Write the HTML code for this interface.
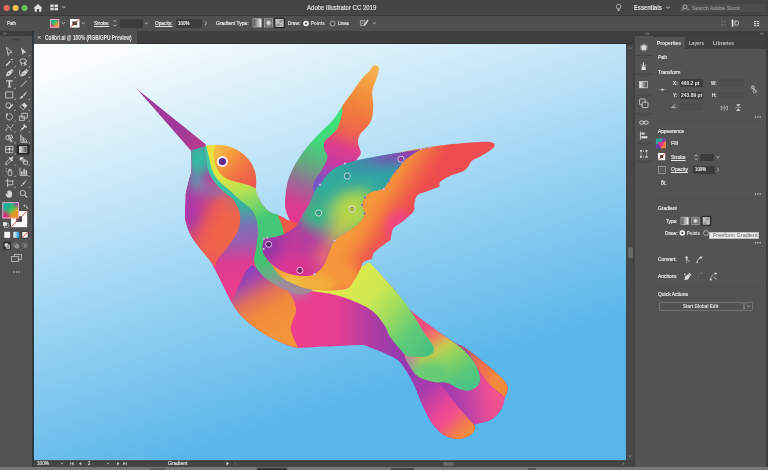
<!DOCTYPE html><html><head><meta charset="utf-8"><title>Adobe Illustrator CC 2019</title><style>
*{box-sizing:border-box;margin:0;padding:0}
html,body{width:768px;height:470px;overflow:hidden;background:#535353}
body{position:relative;font-family:"Liberation Sans",sans-serif;font-size:6.2px;color:#e6e6e6;line-height:1;-webkit-text-stroke:.22px currentColor}
.a{position:absolute}
.t{position:absolute;white-space:nowrap;line-height:1;transform-origin:0 50%}
.b{font-weight:bold;-webkit-text-stroke:0}
.u{text-decoration:underline;text-decoration-thickness:.5px;text-underline-offset:.8px}
#title{left:0;top:0;width:768px;height:15px;background:#454545}
#ctrl{left:0;top:15px;width:768px;height:16px;background:#4f4f4f;border-top:.8px solid #393939}
#tabs{left:33px;top:31px;width:602px;height:13.3px;background:#3e3e3e;border-bottom:.8px solid #303030}
#tab{left:33.6px;top:31.4px;width:103.4px;height:12.9px;background:#505050}
#tools{left:0;top:31px;width:32px;height:436px;background:#525252}
#toolsh{left:0;top:31px;width:32px;height:5px;background:#3e3e3e}
#tooledge{left:32px;top:31px;width:1.5px;height:436px;background:#333a3e}
#canvas{left:33.5px;top:44.3px;width:592.5px;height:416.2px;background:linear-gradient(162.3deg,#fafdfe 5.4%,#aadbf5 41%,#59b6ea 76.5%)}
#vscroll{left:626px;top:44px;width:7px;height:423px;background:#494949;border-left:1.2px solid #3c444c}
#vthumb{left:628px;top:247px;width:5px;height:11px;background:#6b6b6b;border-radius:2.5px}
#hscroll{left:33.5px;top:460.5px;width:600.5px;height:6.8px;background:#454545;border-top:.6px solid #383838}
#hthumb{left:443px;top:461.7px;width:11px;height:4.3px;background:#666;border-radius:2.1px}
#gap{left:633px;top:31px;width:1.6px;height:436px;background:#414141}
#strip{left:634.6px;top:31px;width:18px;height:436px;background:#535353}
#striph{left:634.6px;top:31px;width:18px;height:5px;background:#3e3e3e}
#pedge{left:652.5px;top:31px;width:.9px;height:436px;background:#434343}
#panel{left:653.3px;top:31px;width:112.5px;height:436px;background:#535353}
#panelh{left:653.3px;top:31px;width:114.7px;height:5.5px;background:#3e3e3e}
#ptabs{left:653.3px;top:36.5px;width:112.5px;height:12.3px;background:#404040}
#ptab{left:653.3px;top:36.5px;width:32px;height:12.3px;background:#535353}
#redge{left:765.8px;top:31px;width:2.2px;height:436px;background:#3c3c3c}
#bottom{left:0;top:467.3px;width:768px;height:2.7px;background:#777774}
.in{position:absolute;background:#3c3c3c;border-radius:.8px}
.ind{position:absolute;background:#4e4e4e;border-radius:.8px}
svg{position:absolute;left:0;top:0}
</style></head><body><div class="a" id="title"></div><div class="a" id="ctrl"></div><div class="a" id="tabs"></div><div class="a" id="tab"></div><div class="a" id="tools"></div><div class="a" id="toolsh"></div><div class="a" id="tooledge"></div><div class="a" id="canvas"></div><div class="a" id="vscroll"></div><div class="a" id="vthumb"></div><div class="a" id="hscroll"></div><div class="a" id="hthumb"></div><div class="a" id="gap"></div><div class="a" id="strip"></div><div class="a" id="striph"></div><div class="a" id="pedge"></div><div class="a" id="panel"></div><div class="a" id="panelh"></div><div class="a" id="ptabs"></div><div class="a" id="ptab"></div><div class="a" id="redge"></div><div class="a" id="bottom"></div><svg width="768" height="470" viewBox="0 0 768 470"><defs><clipPath id="cv"><rect x="33.5" y="44.3" width="592.5" height="416.2"/></clipPath></defs><g clip-path="url(#cv)"><defs><filter id="bl" x="-50%" y="-50%" width="200%" height="200%"><feGaussianBlur stdDeviation="5"/></filter><filter id="bl2" x="-50%" y="-50%" width="200%" height="200%"><feGaussianBlur stdDeviation="6.5"/></filter><linearGradient id="gW1a" gradientUnits="userSpaceOnUse" x1="338" y1="108" x2="292" y2="222"><stop offset="0" stop-color="#3fe57c"/><stop offset="0.3" stop-color="#40d87a"/><stop offset="0.5" stop-color="#62ad80"/><stop offset="0.68" stop-color="#9a6a96"/><stop offset="0.85" stop-color="#d83c92"/><stop offset="1" stop-color="#ea3690"/></linearGradient><linearGradient id="gW1b" gradientUnits="userSpaceOnUse" x1="372" y1="66" x2="330" y2="190"><stop offset="0" stop-color="#f7b54c"/><stop offset="0.22" stop-color="#f3913c"/><stop offset="0.42" stop-color="#f0743f"/><stop offset="0.54" stop-color="#ee6250"/><stop offset="0.66" stop-color="#de3e8e"/><stop offset="0.8" stop-color="#c83aa0"/><stop offset="0.92" stop-color="#8c50c0"/><stop offset="1" stop-color="#7058c8"/></linearGradient><linearGradient id="gH1" gradientUnits="userSpaceOnUse" x1="140" y1="92" x2="200" y2="148"><stop offset="0" stop-color="#9a3a9e"/><stop offset="0.7" stop-color="#a23a98"/><stop offset="1" stop-color="#b83a8c"/></linearGradient><linearGradient id="gBase" gradientUnits="userSpaceOnUse" x1="290" y1="330" x2="395" y2="330"><stop offset="0" stop-color="#ee3f8c"/><stop offset="0.45" stop-color="#e53e92"/><stop offset="0.8" stop-color="#ab3ca4"/><stop offset="1" stop-color="#9a3cac"/></linearGradient><clipPath id="c_base"><path d="M205.0 146.0C205.8 146.1 208.2 146.3 210.0 146.4C211.8 146.5 213.2 146.2 216.0 146.4C218.8 146.6 223.3 146.7 227.0 147.6C230.7 148.5 234.5 149.8 238.0 152.0C241.5 154.2 245.4 157.4 248.0 160.5C250.6 163.6 252.6 167.2 253.8 170.5C255.1 173.8 255.2 177.1 255.5 180.0C255.8 182.9 254.9 185.2 255.3 188.0C255.7 190.8 256.5 193.8 258.0 197.0C259.5 200.2 262.2 204.4 264.4 207.0C266.6 209.6 268.6 211.1 271.0 212.5C273.4 213.9 276.0 214.0 279.0 215.6C282.0 217.2 283.0 216.3 289.0 222.0C295.0 227.7 305.7 240.0 315.0 250.0C324.3 260.0 337.5 278.0 345.0 282.0C352.5 286.0 356.0 277.1 360.0 274.0C364.0 270.9 367.3 265.0 368.8 263.2C372.8 267.3 385.7 279.7 392.6 287.6C399.5 295.5 403.8 303.8 410.4 310.4C417.0 317.0 424.6 321.7 432.5 327.4C440.4 333.1 452.8 341.3 458.0 344.6C463.2 347.9 459.3 343.8 464.0 347.0C468.7 350.2 479.8 358.9 486.0 364.0C492.2 369.1 497.8 373.9 501.4 377.6C505.0 381.3 506.5 383.4 507.4 386.0C508.3 388.6 507.2 391.2 506.8 393.0C506.4 394.8 505.1 396.3 504.8 397.0C504.6 397.9 504.5 400.0 503.8 402.3C503.1 404.6 502.4 408.0 500.4 410.8C498.4 413.6 495.0 417.3 491.9 419.3C488.8 421.3 484.7 421.9 481.7 422.7C478.7 423.5 475.3 424.1 474.0 424.4C474.1 425.3 475.6 427.8 474.9 429.6C474.2 431.5 472.4 433.9 469.8 435.5C467.2 437.1 462.7 438.5 459.6 438.9C456.5 439.3 454.1 439.0 451.0 438.0C447.9 437.0 444.2 435.8 440.8 433.0C437.4 430.2 433.7 425.8 430.6 421.0C427.5 416.2 424.8 410.2 422.0 404.0C419.2 397.8 416.4 389.4 413.6 383.6C410.8 377.8 407.6 372.9 405.0 369.0C402.4 365.1 401.3 362.6 398.0 360.0C394.7 357.4 389.7 355.6 385.0 353.5C380.3 351.4 374.2 348.9 370.0 347.5C365.8 346.1 367.5 345.1 360.0 345.0C352.5 344.9 335.3 346.2 325.0 346.6C314.7 347.1 304.9 348.2 298.0 347.7C291.1 347.2 289.4 345.9 283.5 343.5C277.6 341.1 269.6 337.5 262.6 333.0C255.7 328.5 247.0 321.6 241.8 316.4C236.6 311.2 234.8 307.7 231.3 301.8C227.8 295.9 224.2 287.4 220.9 280.9C217.7 274.4 215.1 267.8 211.8 262.6C208.5 257.5 204.8 254.5 201.3 250.0C197.8 245.5 193.5 240.3 190.9 235.5C188.3 230.7 186.7 224.6 185.7 220.9C184.7 217.2 185.0 217.0 185.0 213.5C185.0 210.0 185.5 203.5 185.7 200.0C185.9 196.5 185.4 195.9 186.0 192.6C186.6 189.3 188.1 183.5 189.0 180.0C189.9 176.5 190.9 175.0 191.3 171.7C191.7 168.4 191.6 163.6 191.5 160.0C191.4 156.4 191.1 152.0 191.0 150.4C193.3 149.7 202.7 146.7 205.0 146.0Z"/></clipPath><linearGradient id="gT3" gradientUnits="userSpaceOnUse" x1="458" y1="346" x2="506" y2="392"><stop offset="0" stop-color="#9a5a7c"/><stop offset="0.2" stop-color="#c8606a"/><stop offset="0.45" stop-color="#f0704c"/><stop offset="0.7" stop-color="#f28a3a"/><stop offset="1" stop-color="#f28a3a"/></linearGradient><clipPath id="c_T3"><path d="M450.0 340.0C451.3 340.8 455.7 343.4 458.0 344.6C460.3 345.8 459.3 343.8 464.0 347.0C468.7 350.2 479.8 358.9 486.0 364.0C492.2 369.1 497.8 373.9 501.4 377.6C505.0 381.3 506.5 383.4 507.4 386.0C508.3 388.6 507.2 391.2 506.8 393.0C506.4 394.8 505.1 396.3 504.8 397.0C502.2 394.9 493.8 388.8 489.5 384.4C485.2 380.0 482.9 376.2 479.3 370.8C475.7 365.4 469.9 355.1 468.0 352.0C465.0 350.0 453.0 342.0 450.0 340.0Z"/></clipPath><linearGradient id="gF1" gradientUnits="userSpaceOnUse" x1="412" y1="372" x2="470" y2="432"><stop offset="0" stop-color="#953ab2"/><stop offset="0.3" stop-color="#b03caa"/><stop offset="0.55" stop-color="#e6449a"/><stop offset="0.72" stop-color="#f2528a"/><stop offset="0.88" stop-color="#f27a50"/><stop offset="1" stop-color="#f28c38"/></linearGradient><linearGradient id="gF2" gradientUnits="userSpaceOnUse" x1="440" y1="400" x2="503" y2="392"><stop offset="0" stop-color="#9c3cb0"/><stop offset="0.4" stop-color="#b840a8"/><stop offset="0.75" stop-color="#ea4e94"/><stop offset="1" stop-color="#f5558c"/></linearGradient><linearGradient id="gT2" gradientUnits="userSpaceOnUse" x1="414" y1="314" x2="466" y2="392"><stop offset="0" stop-color="#f2487f"/><stop offset="0.2" stop-color="#f0527c"/><stop offset="0.33" stop-color="#ee8260"/><stop offset="0.45" stop-color="#c8c850"/><stop offset="0.58" stop-color="#98d45c"/><stop offset="0.8" stop-color="#5cc878"/><stop offset="1" stop-color="#48c488"/></linearGradient><clipPath id="c_T2"><path d="M410.4 310.4C414.1 313.2 425.0 321.9 432.5 327.4C440.0 332.9 449.4 338.9 455.5 343.6C461.6 348.3 465.3 351.3 469.0 355.5C472.7 359.7 475.8 365.0 477.6 369.0C479.4 373.0 480.0 376.5 480.0 379.3C480.0 382.1 479.4 384.1 477.6 386.0C475.8 387.9 472.1 389.9 469.0 390.4C465.9 390.8 462.7 390.0 459.0 388.7C455.3 387.4 451.2 383.8 447.0 382.7C442.8 381.6 438.7 383.0 434.0 382.0C429.3 381.0 422.5 379.1 418.7 376.8C414.9 374.5 413.4 371.8 411.0 368.0C408.6 364.2 405.8 359.5 404.0 354.0C402.2 348.5 400.2 341.0 400.0 335.0C399.8 329.0 401.3 322.1 403.0 318.0C404.7 313.9 409.2 311.7 410.4 310.4Z"/></clipPath><linearGradient id="gT1" gradientUnits="userSpaceOnUse" x1="345" y1="275" x2="430" y2="352"><stop offset="0" stop-color="#e2ea4c"/><stop offset="0.3" stop-color="#cde850"/><stop offset="0.52" stop-color="#a0dc5e"/><stop offset="0.75" stop-color="#62cc76"/><stop offset="1" stop-color="#48c080"/></linearGradient><clipPath id="c_T1"><path d="M300.0 287.0C305.0 285.8 321.3 282.5 330.0 280.0C338.7 277.5 345.4 275.0 352.0 272.0C358.6 269.0 366.4 263.8 369.3 262.2C373.2 266.4 385.8 279.6 392.6 287.6C399.5 295.6 405.2 302.9 410.4 310.4C415.6 317.9 420.5 327.1 424.0 332.5C427.5 337.9 429.8 340.2 431.5 343.0C433.2 345.8 434.1 347.6 434.0 349.5C433.9 351.4 432.7 353.2 431.0 354.5C429.3 355.8 426.8 356.7 424.0 357.0C421.2 357.3 417.1 356.9 414.0 356.5C410.9 356.1 409.4 357.8 405.5 354.7C401.6 351.6 394.4 342.9 390.9 338.0C387.4 333.1 387.5 329.6 384.3 325.0C381.1 320.4 377.4 314.7 371.8 310.5C366.2 306.3 357.9 302.8 350.9 300.0C343.9 297.2 336.5 295.3 330.0 293.8C323.5 292.3 317.0 292.1 312.0 291.0C307.0 289.9 302.0 287.7 300.0 287.0Z"/></clipPath><linearGradient id="gB4" gradientUnits="userSpaceOnUse" x1="248" y1="268" x2="285" y2="335"><stop offset="0" stop-color="#8440c4"/><stop offset="0.18" stop-color="#a84aa8"/><stop offset="0.4" stop-color="#e0705c"/><stop offset="0.6" stop-color="#f08a3e"/><stop offset="1" stop-color="#f5953a"/></linearGradient><linearGradient id="gB3" gradientUnits="userSpaceOnUse" x1="222" y1="146" x2="270" y2="288"><stop offset="0" stop-color="#ece23e"/><stop offset="0.2" stop-color="#dde444"/><stop offset="0.33" stop-color="#b4e054"/><stop offset="0.45" stop-color="#74d568"/><stop offset="0.55" stop-color="#44c878"/><stop offset="0.8" stop-color="#42c474"/><stop offset="0.92" stop-color="#6aae86"/><stop offset="1" stop-color="#a08a9a"/></linearGradient><linearGradient id="gB2" gradientUnits="userSpaceOnUse" x1="230" y1="150" x2="235" y2="300"><stop offset="0" stop-color="#40cca8"/><stop offset="0.25" stop-color="#3cc0a2"/><stop offset="0.38" stop-color="#3ab09e"/><stop offset="0.5" stop-color="#7a72b4"/><stop offset="0.6" stop-color="#9660b2"/><stop offset="0.75" stop-color="#dc3c94"/><stop offset="1" stop-color="#ef3f8a"/></linearGradient><linearGradient id="gB1" gradientUnits="userSpaceOnUse" x1="186" y1="205" x2="232" y2="228"><stop offset="0" stop-color="#a83aa6"/><stop offset="0.22" stop-color="#bc3e96"/><stop offset="0.55" stop-color="#ea5a58"/><stop offset="0.75" stop-color="#f0624a"/><stop offset="1" stop-color="#f0644a"/></linearGradient><clipPath id="c_B1"><path d="M191.0 150.4C191.1 152.0 191.4 156.4 191.5 160.0C191.6 163.6 191.7 168.4 191.3 171.7C190.9 175.0 189.9 176.5 189.0 180.0C188.1 183.5 186.6 189.3 186.0 192.6C185.4 195.9 185.9 196.5 185.7 200.0C185.5 203.5 185.0 210.0 185.0 213.5C185.0 217.0 184.7 217.2 185.7 220.9C186.7 224.6 188.3 230.7 190.9 235.5C193.5 240.3 197.8 245.5 201.3 250.0C204.8 254.5 209.5 259.8 211.8 262.6C214.1 265.4 214.4 266.1 214.9 266.8C215.4 265.4 215.7 262.0 218.0 258.5C220.3 255.0 225.2 250.6 228.5 246.0C231.8 241.4 235.9 236.2 237.8 231.0C239.7 225.8 240.7 219.8 240.0 214.6C239.3 209.4 235.7 203.3 233.5 200.0C231.3 196.7 229.2 196.4 227.0 194.5C224.8 192.6 222.3 190.9 220.0 188.5C217.7 186.1 215.0 183.1 213.0 180.0C211.0 176.9 209.2 173.8 208.0 170.0C206.8 166.2 206.3 161.0 205.8 157.0C205.3 153.0 205.0 147.8 204.8 146.0C202.5 146.7 193.3 149.7 191.0 150.4Z"/></clipPath><linearGradient id="gH4" gradientUnits="userSpaceOnUse" x1="217" y1="148" x2="253" y2="186"><stop offset="0" stop-color="#f7b846"/><stop offset="0.3" stop-color="#f5983c"/><stop offset="0.65" stop-color="#f07044"/><stop offset="1" stop-color="#ee584c"/></linearGradient><clipPath id="c_H4"><path d="M215.6 145.0C216.5 145.0 219.1 145.0 221.0 145.2C222.9 145.4 224.1 145.1 227.0 146.0C229.9 146.9 235.0 148.5 238.6 150.8C242.2 153.1 246.2 156.5 248.8 159.7C251.5 162.9 253.3 166.6 254.5 170.0C255.7 173.4 256.0 176.9 256.2 180.0C256.4 183.1 255.9 187.0 255.8 188.4C254.6 187.9 251.7 186.2 248.8 185.2C245.9 184.2 242.2 183.7 238.6 182.6C235.0 181.5 230.2 180.5 227.0 178.8C223.8 177.1 221.4 175.0 219.4 172.4C217.4 169.8 215.9 166.7 215.0 163.5C214.1 160.3 213.6 156.4 213.7 153.3C213.8 150.2 215.3 146.4 215.6 145.0Z"/></clipPath><linearGradient id="gW2b" gradientUnits="userSpaceOnUse" x1="398" y1="158" x2="433.5" y2="180.6"><stop offset="0" stop-color="#f6993a"/><stop offset="0.25" stop-color="#f58a3c"/><stop offset="0.6" stop-color="#f06448"/><stop offset="0.85" stop-color="#ee504c"/><stop offset="1" stop-color="#ee4c50"/></linearGradient><clipPath id="c_W2b"><path d="M430.0 147.0C433.8 146.5 444.6 144.8 453.0 144.0C461.4 143.2 473.9 142.3 480.2 142.0C486.5 141.7 488.6 141.8 491.0 142.3C493.4 142.8 494.5 143.7 494.6 144.8C494.7 146.0 494.1 147.2 491.7 149.2C489.3 151.1 483.5 154.6 480.2 156.5C476.9 158.4 473.8 159.1 471.9 160.7C470.0 162.3 469.2 165.1 468.7 166.0C467.8 166.8 466.8 169.3 463.5 171.0C460.2 172.7 452.8 174.6 449.0 176.4C445.2 178.2 442.1 179.9 440.5 181.6C438.9 183.3 439.7 185.9 439.5 186.8C437.6 187.5 431.6 189.6 428.0 191.0C424.4 192.4 419.9 192.9 417.6 195.0C415.3 197.1 415.1 200.8 414.4 203.5C413.7 206.2 415.5 208.0 413.6 210.9C411.7 213.8 406.3 218.2 403.0 221.0C399.7 223.8 395.7 225.4 393.8 227.6C391.9 229.8 392.0 231.9 391.5 234.0C391.0 236.1 390.8 239.0 390.6 240.0C388.8 241.2 382.8 245.3 380.0 247.4C377.2 249.5 375.4 250.7 374.0 252.6C372.6 254.5 372.2 257.8 371.9 258.9C370.5 259.4 365.4 260.3 363.5 262.0C361.6 263.7 362.1 266.0 360.4 269.3C358.6 272.6 355.3 278.7 353.0 281.9C350.7 285.1 350.5 287.1 346.7 288.5C342.9 289.9 336.1 290.4 330.0 290.5C323.9 290.6 315.8 290.0 310.0 289.0C304.2 288.0 300.0 286.7 295.0 284.5C290.0 282.3 284.2 279.8 280.0 276.0C275.8 272.2 271.7 264.3 270.0 262.0C273.3 260.8 281.7 260.0 290.0 255.0C298.3 250.0 310.8 239.2 320.0 232.0C329.2 224.8 337.5 220.7 345.0 212.0C352.5 203.3 356.7 189.5 365.0 180.0C373.3 170.5 384.2 160.5 395.0 155.0C405.8 149.5 424.2 148.3 430.0 147.0Z"/></clipPath><linearGradient id="gW2a" gradientUnits="userSpaceOnUse" x1="372" y1="168" x2="283" y2="262"><stop offset="0" stop-color="#2fa4a4"/><stop offset="0.42" stop-color="#33ac98"/><stop offset="0.58" stop-color="#7e8496"/><stop offset="0.72" stop-color="#b0409e"/><stop offset="1" stop-color="#d6369a"/></linearGradient><clipPath id="c_W2a"><path d="M264.0 238.6C265.8 238.3 271.5 237.9 275.0 237.0C278.5 236.1 281.7 235.1 285.0 233.4C288.3 231.7 292.3 229.6 295.0 227.0C297.7 224.4 298.6 221.7 301.0 217.7C303.4 213.7 307.4 207.5 309.7 203.0C312.0 198.5 313.3 193.6 315.0 190.5C316.7 187.4 319.2 185.7 320.0 184.7C322.1 182.2 327.0 173.6 332.6 169.7C338.2 165.8 343.8 163.9 353.5 161.3C363.2 158.7 379.6 156.0 391.0 154.0C402.4 152.0 415.3 150.4 421.8 149.2C428.3 148.0 428.6 147.4 430.0 147.0C428.3 147.5 423.2 148.4 420.0 149.8C416.8 151.2 413.7 153.6 411.0 155.5C408.3 157.4 405.6 159.2 403.6 161.3C401.6 163.4 400.2 166.3 398.8 168.0C397.4 169.7 396.6 169.5 395.0 171.7C393.4 173.9 390.9 178.1 389.0 181.0C387.1 183.9 384.7 187.7 383.8 189.0C381.5 189.6 373.3 191.1 370.2 192.6C367.1 194.1 366.4 195.7 365.0 197.8C363.6 199.9 362.0 202.4 361.9 205.0C361.8 207.6 364.9 210.7 364.5 213.5C364.1 216.3 362.8 218.8 359.8 221.9C356.9 225.0 351.0 228.7 346.8 231.8C342.6 234.9 337.7 237.2 334.7 240.7C331.7 244.2 330.8 248.5 329.0 252.6C327.2 256.6 326.2 261.4 323.8 265.0C321.4 268.6 317.8 272.2 314.4 274.0C311.0 275.8 308.2 276.2 303.6 276.0C299.0 275.8 292.2 274.9 287.0 273.0C281.8 271.1 276.3 268.2 272.3 264.7C268.3 261.2 264.4 256.4 263.0 252.0C261.6 247.7 263.8 240.8 264.0 238.6Z"/></clipPath></defs><path d="M293.0 226.0C292.1 224.3 289.0 219.4 287.7 215.6C286.4 211.8 284.8 209.3 285.0 203.0C285.2 196.7 286.1 186.0 288.8 178.0C291.5 170.0 296.5 161.8 301.0 155.0C305.5 148.2 310.7 142.8 316.0 137.0C321.3 131.2 328.1 125.8 332.6 120.5C337.1 115.2 341.3 107.6 343.0 105.0C344.5 104.2 350.8 95.8 352.0 100.0C353.2 104.2 352.0 118.3 350.0 130.0C348.0 141.7 343.3 158.3 340.0 170.0C336.7 181.7 334.2 190.3 330.0 200.0C325.8 209.7 317.5 223.3 315.0 228.0C311.3 227.7 296.7 226.3 293.0 226.0Z" fill="url(#gW1a)" /><path d="M369.6 71.0C370.0 70.4 371.0 68.2 372.0 67.2C373.0 66.2 374.5 65.2 375.6 65.2C376.7 65.2 378.3 66.1 378.8 67.2C379.3 68.3 378.8 70.1 378.4 72.0C378.0 73.9 377.5 75.3 376.5 78.5C375.5 81.7 372.8 86.4 372.3 91.3C371.8 96.2 373.7 102.8 373.3 108.0C372.9 113.2 372.4 118.1 370.2 122.6C367.9 127.1 361.8 131.5 359.8 135.0C357.8 138.5 357.8 140.5 358.0 143.5C358.2 146.5 361.0 150.2 360.8 153.0C360.6 155.8 358.4 156.3 356.6 160.0C354.8 163.7 353.6 170.0 350.0 175.0C346.4 180.0 340.7 186.5 335.0 190.0C329.3 193.5 319.2 195.0 316.0 196.0C315.5 195.0 313.2 192.7 313.0 190.0C312.8 187.3 313.5 183.4 315.0 180.0C316.5 176.6 319.9 173.5 322.0 169.7C324.1 165.9 327.0 160.3 327.4 157.0C327.8 153.7 324.9 152.7 324.5 150.0C324.1 147.3 322.9 144.5 325.0 141.0C327.1 137.5 334.0 133.4 336.8 128.9C339.6 124.4 341.0 118.0 342.0 114.0C343.0 110.0 341.4 108.4 343.0 105.0C344.6 101.6 348.2 97.8 351.4 93.4C354.5 89.0 358.9 82.5 361.9 78.8C364.9 75.1 368.3 72.3 369.6 71.0Z" fill="url(#gW1b)" /><path d="M137.5 89.5L205.6 144.2L206 147L192 152L190.8 150.4Z" fill="url(#gH1)"/><path d="M205.0 146.0C205.8 146.1 208.2 146.3 210.0 146.4C211.8 146.5 213.2 146.2 216.0 146.4C218.8 146.6 223.3 146.7 227.0 147.6C230.7 148.5 234.5 149.8 238.0 152.0C241.5 154.2 245.4 157.4 248.0 160.5C250.6 163.6 252.6 167.2 253.8 170.5C255.1 173.8 255.2 177.1 255.5 180.0C255.8 182.9 254.9 185.2 255.3 188.0C255.7 190.8 256.5 193.8 258.0 197.0C259.5 200.2 262.2 204.4 264.4 207.0C266.6 209.6 268.6 211.1 271.0 212.5C273.4 213.9 276.0 214.0 279.0 215.6C282.0 217.2 283.0 216.3 289.0 222.0C295.0 227.7 305.7 240.0 315.0 250.0C324.3 260.0 337.5 278.0 345.0 282.0C352.5 286.0 356.0 277.1 360.0 274.0C364.0 270.9 367.3 265.0 368.8 263.2C372.8 267.3 385.7 279.7 392.6 287.6C399.5 295.5 403.8 303.8 410.4 310.4C417.0 317.0 424.6 321.7 432.5 327.4C440.4 333.1 452.8 341.3 458.0 344.6C463.2 347.9 459.3 343.8 464.0 347.0C468.7 350.2 479.8 358.9 486.0 364.0C492.2 369.1 497.8 373.9 501.4 377.6C505.0 381.3 506.5 383.4 507.4 386.0C508.3 388.6 507.2 391.2 506.8 393.0C506.4 394.8 505.1 396.3 504.8 397.0C504.6 397.9 504.5 400.0 503.8 402.3C503.1 404.6 502.4 408.0 500.4 410.8C498.4 413.6 495.0 417.3 491.9 419.3C488.8 421.3 484.7 421.9 481.7 422.7C478.7 423.5 475.3 424.1 474.0 424.4C474.1 425.3 475.6 427.8 474.9 429.6C474.2 431.5 472.4 433.9 469.8 435.5C467.2 437.1 462.7 438.5 459.6 438.9C456.5 439.3 454.1 439.0 451.0 438.0C447.9 437.0 444.2 435.8 440.8 433.0C437.4 430.2 433.7 425.8 430.6 421.0C427.5 416.2 424.8 410.2 422.0 404.0C419.2 397.8 416.4 389.4 413.6 383.6C410.8 377.8 407.6 372.9 405.0 369.0C402.4 365.1 401.3 362.6 398.0 360.0C394.7 357.4 389.7 355.6 385.0 353.5C380.3 351.4 374.2 348.9 370.0 347.5C365.8 346.1 367.5 345.1 360.0 345.0C352.5 344.9 335.3 346.2 325.0 346.6C314.7 347.1 304.9 348.2 298.0 347.7C291.1 347.2 289.4 345.9 283.5 343.5C277.6 341.1 269.6 337.5 262.6 333.0C255.7 328.5 247.0 321.6 241.8 316.4C236.6 311.2 234.8 307.7 231.3 301.8C227.8 295.9 224.2 287.4 220.9 280.9C217.7 274.4 215.1 267.8 211.8 262.6C208.5 257.5 204.8 254.5 201.3 250.0C197.8 245.5 193.5 240.3 190.9 235.5C188.3 230.7 186.7 224.6 185.7 220.9C184.7 217.2 185.0 217.0 185.0 213.5C185.0 210.0 185.5 203.5 185.7 200.0C185.9 196.5 185.4 195.9 186.0 192.6C186.6 189.3 188.1 183.5 189.0 180.0C189.9 176.5 190.9 175.0 191.3 171.7C191.7 168.4 191.6 163.6 191.5 160.0C191.4 156.4 191.1 152.0 191.0 150.4C193.3 149.7 202.7 146.7 205.0 146.0Z" fill="url(#gBase)"/><g clip-path="url(#c_base)"><g filter="url(#bl)"><ellipse cx="296" cy="290" rx="14" ry="8" fill="#b574a6" opacity="1"/></g></g><path d="M450.0 340.0C451.3 340.8 455.7 343.4 458.0 344.6C460.3 345.8 459.3 343.8 464.0 347.0C468.7 350.2 479.8 358.9 486.0 364.0C492.2 369.1 497.8 373.9 501.4 377.6C505.0 381.3 506.5 383.4 507.4 386.0C508.3 388.6 507.2 391.2 506.8 393.0C506.4 394.8 505.1 396.3 504.8 397.0C502.2 394.9 493.8 388.8 489.5 384.4C485.2 380.0 482.9 376.2 479.3 370.8C475.7 365.4 469.9 355.1 468.0 352.0C465.0 350.0 453.0 342.0 450.0 340.0Z" fill="url(#gT3)"/><g clip-path="url(#c_T3)"><g filter="url(#bl)"><ellipse cx="484" cy="378" rx="5" ry="9" fill="#f0625e" opacity="0.8"/></g></g><path d="M385.0 353.5C387.2 354.6 394.7 357.4 398.0 360.0C401.3 362.6 402.4 365.1 405.0 369.0C407.6 372.9 410.8 377.8 413.6 383.6C416.4 389.4 419.2 397.8 422.0 404.0C424.8 410.2 427.5 416.2 430.6 421.0C433.7 425.8 437.4 430.2 440.8 433.0C444.2 435.8 447.9 437.0 451.0 438.0C454.1 439.0 456.5 439.3 459.6 438.9C462.7 438.5 467.2 437.1 469.8 435.5C472.4 433.9 474.2 431.5 474.9 429.6C475.6 427.8 474.1 425.3 474.0 424.4C471.0 421.0 461.5 410.6 456.0 404.0C450.5 397.4 446.0 390.5 440.8 384.5C435.6 378.5 427.6 370.8 425.0 368.0C418.3 365.6 391.7 355.9 385.0 353.5Z" fill="url(#gF1)" /><path d="M425.0 368.0C427.6 370.8 435.6 378.5 440.8 384.5C446.0 390.5 450.5 397.4 456.0 404.0C461.5 410.6 471.0 421.0 474.0 424.4C475.3 424.1 478.7 423.5 481.7 422.7C484.7 421.9 488.8 421.3 491.9 419.3C495.0 417.3 498.4 413.6 500.4 410.8C502.4 408.0 503.1 404.6 503.8 402.3C504.5 400.0 504.6 397.9 504.8 397.0C502.2 394.9 493.8 388.8 489.5 384.4C485.2 380.0 483.4 376.2 479.3 370.8C475.2 365.4 467.4 355.1 465.0 352.0C458.3 354.7 431.7 365.3 425.0 368.0Z" fill="url(#gF2)" /><path d="M410.4 310.4C414.1 313.2 425.0 321.9 432.5 327.4C440.0 332.9 449.4 338.9 455.5 343.6C461.6 348.3 465.3 351.3 469.0 355.5C472.7 359.7 475.8 365.0 477.6 369.0C479.4 373.0 480.0 376.5 480.0 379.3C480.0 382.1 479.4 384.1 477.6 386.0C475.8 387.9 472.1 389.9 469.0 390.4C465.9 390.8 462.7 390.0 459.0 388.7C455.3 387.4 451.2 383.8 447.0 382.7C442.8 381.6 438.7 383.0 434.0 382.0C429.3 381.0 422.5 379.1 418.7 376.8C414.9 374.5 413.4 371.8 411.0 368.0C408.6 364.2 405.8 359.5 404.0 354.0C402.2 348.5 400.2 341.0 400.0 335.0C399.8 329.0 401.3 322.1 403.0 318.0C404.7 313.9 409.2 311.7 410.4 310.4Z" fill="url(#gT2)"/><g clip-path="url(#c_T2)"><g filter="url(#bl)"><ellipse cx="407" cy="362" rx="8" ry="10" fill="#a48aa4" opacity="1"/><ellipse cx="428" cy="371" rx="20" ry="10" fill="#52c880" opacity="0.7"/><ellipse cx="456" cy="389" rx="14" ry="6" fill="#4ac486" opacity="0.8"/></g></g><path d="M300.0 287.0C305.0 285.8 321.3 282.5 330.0 280.0C338.7 277.5 345.4 275.0 352.0 272.0C358.6 269.0 366.4 263.8 369.3 262.2C373.2 266.4 385.8 279.6 392.6 287.6C399.5 295.6 405.2 302.9 410.4 310.4C415.6 317.9 420.5 327.1 424.0 332.5C427.5 337.9 429.8 340.2 431.5 343.0C433.2 345.8 434.1 347.6 434.0 349.5C433.9 351.4 432.7 353.2 431.0 354.5C429.3 355.8 426.8 356.7 424.0 357.0C421.2 357.3 417.1 356.9 414.0 356.5C410.9 356.1 409.4 357.8 405.5 354.7C401.6 351.6 394.4 342.9 390.9 338.0C387.4 333.1 387.5 329.6 384.3 325.0C381.1 320.4 377.4 314.7 371.8 310.5C366.2 306.3 357.9 302.8 350.9 300.0C343.9 297.2 336.5 295.3 330.0 293.8C323.5 292.3 317.0 292.1 312.0 291.0C307.0 289.9 302.0 287.7 300.0 287.0Z" fill="url(#gT1)"/><g clip-path="url(#c_T1)"><g filter="url(#bl)"><ellipse cx="300" cy="289" rx="12" ry="7" fill="#b078a2" opacity="1"/></g></g><path d="M250.0 267.0C250.7 266.8 250.8 263.7 254.0 266.0C257.2 268.3 263.4 276.8 269.0 281.0C274.6 285.2 283.2 286.5 287.7 291.0C292.2 295.5 295.1 303.2 296.0 308.0C296.9 312.8 293.9 316.5 293.0 320.0C292.1 323.5 290.6 325.8 290.8 329.0C291.0 332.2 292.8 335.9 294.0 339.0C295.2 342.1 297.3 346.2 298.0 347.7C295.6 347.0 289.4 345.9 283.5 343.5C277.6 341.1 269.6 337.5 262.6 333.0C255.7 328.5 247.0 321.6 241.8 316.4C236.6 311.2 233.1 304.2 231.3 301.8C232.1 299.8 234.2 293.8 236.0 290.0C237.8 286.2 240.1 282.0 241.8 278.8C243.5 275.6 244.6 273.0 246.0 271.0C247.4 269.0 249.3 267.7 250.0 267.0Z" fill="url(#gB4)" /><path d="M206.0 146.0C207.7 145.8 214.3 145.0 216.0 144.8C216.7 146.2 219.0 149.6 220.0 153.0C221.0 156.4 220.7 161.7 222.0 165.0C223.3 168.3 225.0 170.8 228.0 173.0C231.0 175.2 236.0 176.5 240.0 178.0C244.0 179.5 249.4 180.3 252.0 182.0C254.6 183.7 255.2 187.3 255.8 188.4C256.2 189.8 256.6 193.9 258.0 197.0C259.4 200.1 262.2 204.4 264.4 207.0C266.6 209.6 268.6 211.1 271.0 212.5C273.4 213.9 277.0 213.5 279.0 215.6C281.0 217.7 281.8 221.6 283.0 225.0C284.2 228.4 284.5 231.0 286.0 236.0C287.5 241.0 289.2 248.2 292.0 255.0C294.8 261.8 299.7 271.2 303.0 277.0C306.3 282.8 312.5 287.2 312.0 290.0C311.5 292.8 304.1 293.8 300.0 294.0C295.9 294.2 292.9 293.2 287.7 291.0C282.5 288.8 273.9 284.5 269.0 281.0C264.1 277.5 260.5 273.8 258.0 270.0C255.5 266.2 254.1 264.4 254.0 258.0C253.9 251.6 257.8 238.9 257.7 231.3C257.6 223.7 255.9 216.9 253.5 212.5C251.1 208.1 246.6 207.6 243.0 205.0C239.4 202.4 235.3 199.4 232.0 196.7C228.7 194.0 226.2 191.8 223.3 189.0C220.4 186.2 216.8 183.2 214.3 180.0C211.9 176.8 209.9 173.8 208.6 170.0C207.3 166.2 207.1 161.0 206.7 157.0C206.3 153.0 206.1 147.8 206.0 146.0Z" fill="url(#gB3)" /><path d="M277.5 215.0C279.2 215.8 284.4 218.5 288.0 220.0C291.6 221.5 297.2 223.3 299.0 224.0C297.8 225.0 294.5 228.2 292.0 230.0C289.5 231.8 285.3 233.8 284.0 234.5C283.7 232.9 283.1 228.2 282.0 225.0C280.9 221.8 278.2 216.7 277.5 215.0Z" fill="#f0584a" /><path d="M206.0 145.6C206.5 147.5 208.0 152.9 209.0 157.0C210.0 161.1 210.5 166.2 212.0 170.0C213.5 173.8 215.3 176.8 218.0 180.0C220.7 183.2 224.3 185.7 228.0 189.0C231.7 192.3 235.8 196.1 240.0 200.0C244.2 203.9 250.6 207.3 253.5 212.5C256.4 217.7 257.6 223.7 257.7 231.3C257.8 238.9 256.1 251.1 254.0 258.0C251.9 264.9 248.0 267.3 245.0 273.0C242.0 278.7 238.3 287.2 236.0 292.0C233.7 296.8 232.1 300.2 231.3 301.8C229.6 298.3 224.6 288.2 220.9 280.9C217.2 273.6 212.5 264.8 209.0 258.0C205.5 251.2 202.3 249.7 200.0 240.0C197.7 230.3 195.8 213.3 195.0 200.0C194.2 186.7 193.2 169.1 195.0 160.0C196.8 150.9 204.2 148.0 206.0 145.6Z" fill="url(#gB2)" /><path d="M191.0 150.4C191.1 152.0 191.4 156.4 191.5 160.0C191.6 163.6 191.7 168.4 191.3 171.7C190.9 175.0 189.9 176.5 189.0 180.0C188.1 183.5 186.6 189.3 186.0 192.6C185.4 195.9 185.9 196.5 185.7 200.0C185.5 203.5 185.0 210.0 185.0 213.5C185.0 217.0 184.7 217.2 185.7 220.9C186.7 224.6 188.3 230.7 190.9 235.5C193.5 240.3 197.8 245.5 201.3 250.0C204.8 254.5 209.5 259.8 211.8 262.6C214.1 265.4 214.4 266.1 214.9 266.8C215.4 265.4 215.7 262.0 218.0 258.5C220.3 255.0 225.2 250.6 228.5 246.0C231.8 241.4 235.9 236.2 237.8 231.0C239.7 225.8 240.7 219.8 240.0 214.6C239.3 209.4 235.7 203.3 233.5 200.0C231.3 196.7 229.2 196.4 227.0 194.5C224.8 192.6 222.3 190.9 220.0 188.5C217.7 186.1 215.0 183.1 213.0 180.0C211.0 176.9 209.2 173.8 208.0 170.0C206.8 166.2 206.3 161.0 205.8 157.0C205.3 153.0 205.0 147.8 204.8 146.0C202.5 146.7 193.3 149.7 191.0 150.4Z" fill="url(#gB1)"/><g clip-path="url(#c_B1)"><g filter="url(#bl)"><ellipse cx="199" cy="158" rx="14" ry="16" fill="#36b8a0" opacity="1"/><ellipse cx="196" cy="181" rx="8" ry="10" fill="#5a98a8" opacity="0.9"/><ellipse cx="189" cy="212" rx="9" ry="16" fill="#b038a6" opacity="1"/><ellipse cx="212" cy="258" rx="8" ry="8" fill="#ee5a5a" opacity="0.8"/><ellipse cx="214" cy="190" rx="18" ry="7" fill="#9a6aa6" opacity="0.95"/><ellipse cx="232" cy="203" rx="6" ry="8" fill="#c46a70" opacity="0.8"/></g></g><path d="M215.6 145.0C216.5 145.0 219.1 145.0 221.0 145.2C222.9 145.4 224.1 145.1 227.0 146.0C229.9 146.9 235.0 148.5 238.6 150.8C242.2 153.1 246.2 156.5 248.8 159.7C251.5 162.9 253.3 166.6 254.5 170.0C255.7 173.4 256.0 176.9 256.2 180.0C256.4 183.1 255.9 187.0 255.8 188.4C254.6 187.9 251.7 186.2 248.8 185.2C245.9 184.2 242.2 183.7 238.6 182.6C235.0 181.5 230.2 180.5 227.0 178.8C223.8 177.1 221.4 175.0 219.4 172.4C217.4 169.8 215.9 166.7 215.0 163.5C214.1 160.3 213.6 156.4 213.7 153.3C213.8 150.2 215.3 146.4 215.6 145.0Z" fill="url(#gH4)"/><g clip-path="url(#c_H4)"><g filter="url(#bl)"><ellipse cx="217" cy="158" rx="4" ry="10" fill="#f6c044" opacity="0.9"/></g></g><circle cx="222.4" cy="161.5" r="5.5" fill="#fce6ef"/><circle cx="222.4" cy="161.5" r="3.6" fill="#5b2d90"/><path d="M430.0 147.0C433.8 146.5 444.6 144.8 453.0 144.0C461.4 143.2 473.9 142.3 480.2 142.0C486.5 141.7 488.6 141.8 491.0 142.3C493.4 142.8 494.5 143.7 494.6 144.8C494.7 146.0 494.1 147.2 491.7 149.2C489.3 151.1 483.5 154.6 480.2 156.5C476.9 158.4 473.8 159.1 471.9 160.7C470.0 162.3 469.2 165.1 468.7 166.0C467.8 166.8 466.8 169.3 463.5 171.0C460.2 172.7 452.8 174.6 449.0 176.4C445.2 178.2 442.1 179.9 440.5 181.6C438.9 183.3 439.7 185.9 439.5 186.8C437.6 187.5 431.6 189.6 428.0 191.0C424.4 192.4 419.9 192.9 417.6 195.0C415.3 197.1 415.1 200.8 414.4 203.5C413.7 206.2 415.5 208.0 413.6 210.9C411.7 213.8 406.3 218.2 403.0 221.0C399.7 223.8 395.7 225.4 393.8 227.6C391.9 229.8 392.0 231.9 391.5 234.0C391.0 236.1 390.8 239.0 390.6 240.0C388.8 241.2 382.8 245.3 380.0 247.4C377.2 249.5 375.4 250.7 374.0 252.6C372.6 254.5 372.2 257.8 371.9 258.9C370.5 259.4 365.4 260.3 363.5 262.0C361.6 263.7 362.1 266.0 360.4 269.3C358.6 272.6 355.3 278.7 353.0 281.9C350.7 285.1 350.5 287.1 346.7 288.5C342.9 289.9 336.1 290.4 330.0 290.5C323.9 290.6 315.8 290.0 310.0 289.0C304.2 288.0 300.0 286.7 295.0 284.5C290.0 282.3 284.2 279.8 280.0 276.0C275.8 272.2 271.7 264.3 270.0 262.0C273.3 260.8 281.7 260.0 290.0 255.0C298.3 250.0 310.8 239.2 320.0 232.0C329.2 224.8 337.5 220.7 345.0 212.0C352.5 203.3 356.7 189.5 365.0 180.0C373.3 170.5 384.2 160.5 395.0 155.0C405.8 149.5 424.2 148.3 430.0 147.0Z" fill="url(#gW2b)"/><g clip-path="url(#c_W2b)"><g filter="url(#bl)"><ellipse cx="400" cy="228" rx="14" ry="18" fill="#ee4488" opacity="0.9"/><ellipse cx="380" cy="252" rx="10" ry="9" fill="#f0506a" opacity="0.6"/><ellipse cx="294" cy="282" rx="16" ry="8" fill="#efc843" opacity="1"/><ellipse cx="316" cy="285" rx="20" ry="9" fill="#f2b43e" opacity="1"/><ellipse cx="346" cy="277" rx="14" ry="14" fill="#f5963b" opacity="1"/><ellipse cx="332" cy="264" rx="12" ry="10" fill="#f5963b" opacity="0.9"/></g></g><path d="M264.0 238.6C265.8 238.3 271.5 237.9 275.0 237.0C278.5 236.1 281.7 235.1 285.0 233.4C288.3 231.7 292.3 229.6 295.0 227.0C297.7 224.4 298.6 221.7 301.0 217.7C303.4 213.7 307.4 207.5 309.7 203.0C312.0 198.5 313.3 193.6 315.0 190.5C316.7 187.4 319.2 185.7 320.0 184.7C322.1 182.2 327.0 173.6 332.6 169.7C338.2 165.8 343.8 163.9 353.5 161.3C363.2 158.7 379.6 156.0 391.0 154.0C402.4 152.0 415.3 150.4 421.8 149.2C428.3 148.0 428.6 147.4 430.0 147.0C428.3 147.5 423.2 148.4 420.0 149.8C416.8 151.2 413.7 153.6 411.0 155.5C408.3 157.4 405.6 159.2 403.6 161.3C401.6 163.4 400.2 166.3 398.8 168.0C397.4 169.7 396.6 169.5 395.0 171.7C393.4 173.9 390.9 178.1 389.0 181.0C387.1 183.9 384.7 187.7 383.8 189.0C381.5 189.6 373.3 191.1 370.2 192.6C367.1 194.1 366.4 195.7 365.0 197.8C363.6 199.9 362.0 202.4 361.9 205.0C361.8 207.6 364.9 210.7 364.5 213.5C364.1 216.3 362.8 218.8 359.8 221.9C356.9 225.0 351.0 228.7 346.8 231.8C342.6 234.9 337.7 237.2 334.7 240.7C331.7 244.2 330.8 248.5 329.0 252.6C327.2 256.6 326.2 261.4 323.8 265.0C321.4 268.6 317.8 272.2 314.4 274.0C311.0 275.8 308.2 276.2 303.6 276.0C299.0 275.8 292.2 274.9 287.0 273.0C281.8 271.1 276.3 268.2 272.3 264.7C268.3 261.2 264.4 256.4 263.0 252.0C261.6 247.7 263.8 240.8 264.0 238.6Z" fill="url(#gW2a)"/><g clip-path="url(#c_W2a)"><g filter="url(#bl2)"><ellipse cx="410" cy="151" rx="26" ry="13" fill="#9a38b2" opacity="1"/><ellipse cx="385" cy="157" rx="18" ry="8" fill="#7a50b4" opacity="0.95"/><ellipse cx="362" cy="163" rx="14" ry="6" fill="#4f78b0" opacity="0.8"/><ellipse cx="318" cy="214" rx="16" ry="13" fill="#34b884" opacity="1"/><ellipse cx="352" cy="211" rx="20" ry="20" fill="#b2d44c" opacity="1"/><ellipse cx="364" cy="200" rx="8" ry="12" fill="#a4d450" opacity="1"/><ellipse cx="341" cy="229" rx="11" ry="10" fill="#c0c650" opacity="0.95"/><ellipse cx="266" cy="247" rx="15" ry="14" fill="#8c34a6" opacity="1"/><ellipse cx="280" cy="240" rx="10" ry="6" fill="#9a3aa8" opacity="0.8"/><ellipse cx="300" cy="268" rx="18" ry="10" fill="#dc368e" opacity="1"/><ellipse cx="325" cy="256" rx="9" ry="13" fill="#ea6a74" opacity="1"/><ellipse cx="334" cy="241" rx="6" ry="6" fill="#dca058" opacity="0.9"/></g></g><circle cx="401" cy="159.2" r="3" fill="none" stroke="#f0ecf4" stroke-width="0.75"/><circle cx="401" cy="159.2" r="2.1" fill="#9a3ab0" stroke="#40304a" stroke-opacity=".55" stroke-width="0.5"/><circle cx="347.2" cy="176" r="3" fill="none" stroke="#f0ecf4" stroke-width="0.75"/><circle cx="347.2" cy="176" r="2.1" fill="#2a9a98" stroke="#40304a" stroke-opacity=".55" stroke-width="0.5"/><circle cx="352" cy="209" r="3" fill="none" stroke="#f0ecf4" stroke-width="0.75"/><circle cx="352" cy="209" r="2.1" fill="#b0c848" stroke="#40304a" stroke-opacity=".55" stroke-width="0.5"/><circle cx="318.6" cy="213" r="3" fill="none" stroke="#f0ecf4" stroke-width="0.75"/><circle cx="318.6" cy="213" r="2.1" fill="#2faa82" stroke="#40304a" stroke-opacity=".55" stroke-width="0.5"/><circle cx="268.7" cy="244.3" r="3" fill="none" stroke="#f0ecf4" stroke-width="0.75"/><circle cx="268.7" cy="244.3" r="2.1" fill="#5c2a7a" stroke="#40304a" stroke-opacity=".55" stroke-width="0.5"/><circle cx="299.9" cy="270.4" r="3" fill="none" stroke="#f0ecf4" stroke-width="0.75"/><circle cx="299.9" cy="270.4" r="2.1" fill="#7a2560" stroke="#40304a" stroke-opacity=".55" stroke-width="0.5"/><circle cx="320" cy="184.7" r="0.9" fill="#fff" stroke="#8a6ad0" stroke-width="0.4"/><circle cx="430" cy="147" r="0.9" fill="#fff" stroke="#8a6ad0" stroke-width="0.4"/><circle cx="424" cy="148.3" r="0.9" fill="#fff" stroke="#8a6ad0" stroke-width="0.4"/><circle cx="421" cy="149" r="0.9" fill="#fff" stroke="#8a6ad0" stroke-width="0.4"/><circle cx="383.8" cy="189" r="0.9" fill="#fff" stroke="#8a6ad0" stroke-width="0.4"/><circle cx="264" cy="238.6" r="0.9" fill="#fff" stroke="#8a6ad0" stroke-width="0.4"/><circle cx="267" cy="237.8" r="0.9" fill="#fff" stroke="#8a6ad0" stroke-width="0.4"/><circle cx="263.6" cy="249" r="0.9" fill="#fff" stroke="#8a6ad0" stroke-width="0.4"/><circle cx="334.7" cy="240.7" r="0.9" fill="#fff" stroke="#8a6ad0" stroke-width="0.4"/><circle cx="314.4" cy="274" r="0.9" fill="#fff" stroke="#8a6ad0" stroke-width="0.4"/><circle cx="345" cy="163.5" r="0.9" fill="#fff" stroke="#8a6ad0" stroke-width="0.4"/><circle cx="395" cy="171.7" r="1" fill="#7a62c8"/><circle cx="389" cy="181" r="1" fill="#7a62c8"/><circle cx="365" cy="197.8" r="1" fill="#7a62c8"/><circle cx="361.9" cy="205" r="1" fill="#7a62c8"/><circle cx="364.5" cy="213.5" r="1" fill="#7a62c8"/><circle cx="403.6" cy="161.3" r="1" fill="#7a62c8"/></g></svg><div class="in" style="left:119.8px;top:18.8px;width:23.2px;height:9px"></div><div class="in" style="left:175.6px;top:18.8px;width:26.4px;height:9px"></div><div class="in" style="left:679.6px;top:79.4px;width:23.8px;height:7.5px"></div><div class="in" style="left:679.6px;top:92.2px;width:23.8px;height:6.8px"></div><div class="ind" style="left:680px;top:103px;width:23.4px;height:8px"></div><div class="ind" style="left:718px;top:79.4px;width:26px;height:7.5px"></div><div class="ind" style="left:718px;top:92.2px;width:26px;height:6.8px"></div><div class="in" style="left:700px;top:153.8px;width:14px;height:6.8px"></div><div class="in" style="left:693px;top:166px;width:21.5px;height:7.5px"></div><div class="a" style="left:680px;top:3.5px;width:85px;height:8.8px;background:#4d4d4d;border-radius:1px"></div><div class="a" style="left:658.5px;top:301.8px;width:85px;height:9.5px;border:.6px solid #727272;border-radius:1px"></div><div class="a" style="left:744.4px;top:301.8px;width:8.5px;height:9.5px;border:.6px solid #727272;border-radius:1px"></div><svg width="768" height="470" viewBox="0 0 768 470" fill="none" stroke="none"><defs>
<linearGradient id="swg" x1="0" y1="0" x2="1" y2="1"><stop offset="0" stop-color="#0fa6a8"/><stop offset=".3" stop-color="#1fb090"/><stop offset=".5" stop-color="#48c25e"/><stop offset=".68" stop-color="#d8a02c"/><stop offset=".85" stop-color="#f28c26"/><stop offset="1" stop-color="#f27a2a"/></linearGradient>
<radialGradient id="swg2" cx="0" cy="1" r=".62"><stop offset="0" stop-color="#e2187c"/><stop offset=".45" stop-color="#e2207c" stop-opacity=".9"/><stop offset="1" stop-color="#e2207c" stop-opacity="0"/></radialGradient>
<radialGradient id="swg3" cx="1" cy="0" r=".45"><stop offset="0" stop-color="#8a3494"/><stop offset=".4" stop-color="#8a3494" stop-opacity=".8"/><stop offset="1" stop-color="#8a3494" stop-opacity="0"/></radialGradient>
<linearGradient id="gl" x1="0" y1="0" x2="1" y2="0"><stop offset="0" stop-color="#4a4a4a"/><stop offset="1" stop-color="#f4f4f4"/></linearGradient>
<linearGradient id="gl2" x1="0" y1="0" x2="1" y2="0"><stop offset="0" stop-color="#f4f4f4"/><stop offset="1" stop-color="#3a3a3a"/></linearGradient>
<radialGradient id="gr"><stop offset="0" stop-color="#fff"/><stop offset="1" stop-color="#6a6a6a"/></radialGradient>
<linearGradient id="gf" x1="0" y1="0" x2="1" y2="1"><stop offset="0" stop-color="#e8e8e8"/><stop offset=".5" stop-color="#8a8a8a"/><stop offset="1" stop-color="#d8d8d8"/></linearGradient>
<linearGradient id="gwb" x1="0" y1="0" x2="1" y2="0"><stop offset="0" stop-color="#fff"/><stop offset="1" stop-color="#1d8fd6"/></linearGradient>
</defs><circle cx="6.6" cy="8" r="3.05" fill="#ed6a5e"/><circle cx="15.6" cy="8" r="3.05" fill="#f5bf4f"/><circle cx="24.6" cy="8" r="3.05" fill="#61c554"/><path d="M33.4 8.3L38 4L42.6 8.3H41.3V11.7H39.1V9.1H36.9V11.7H34.7V8.3Z" fill="#dedede"/><rect x="50.3" y="4.5" width="3.4" height="2.5" fill="#d8d8d8"/><rect x="54.5" y="4.5" width="3.6" height="2.5" fill="#d8d8d8"/><rect x="50.3" y="7.7" width="3.4" height="2.6" fill="#d8d8d8"/><rect x="54.5" y="7.7" width="3.6" height="2.6" fill="#d8d8d8"/><path d="M62 6.3l1.8 1.53l1.8 -1.53" stroke="#d0d0d0" stroke-width="0.8" fill="none"/><circle cx="618.6" cy="6.6" r="2.3" stroke="#d0d0d0" stroke-width=".7"/><path d="M617.6 9.3h2v1.5h-2z" fill="#d0d0d0"/><path d="M666.3 6.8l1.8 1.53l1.8 -1.53" stroke="#e0e0e0" stroke-width="0.8" fill="none"/><circle cx="685" cy="6.9" r="2" stroke="#c4c4c4" stroke-width=".8"/><path d="M683.6 8.5l-1.7 1.8" stroke="#c4c4c4" stroke-width=".9"/><path d="M687.4 9.4h1.6" stroke="#c4c4c4" stroke-width=".8"/><rect x="50" y="19" width="9.2" height="8.6" fill="url(#swg)"/><rect x="50" y="19" width="9.2" height="8.6" fill="url(#swg2)"/><rect x="50" y="19" width="9.2" height="8.6" fill="url(#swg3)"/><rect x="50.45" y="19.45" width="8.3" height="7.7" fill="none" stroke="#f0b4d2" stroke-width=".9"/><path d="M61.8 22.4l1.6 1.36l1.6 -1.36" stroke="#d0d0d0" stroke-width="0.8" fill="none"/><rect x="70" y="19" width="9.5" height="8.6" fill="#fafafa"/><path d="M70.3 27.3L79.2 19.3" stroke="#c8302c" stroke-width=".85"/><rect x="72.4" y="21.4" width="4.7" height="3.8" fill="#4a4440"/><path d="M72.4 25.2L77.1 21.4" stroke="#b8403a" stroke-width=".7"/><path d="M81.8 22.4l1.6 1.36l1.6 -1.36" stroke="#d0d0d0" stroke-width="0.8" fill="none"/><path d="M113.3 21.6l1.5 -1.275l1.5 1.275" stroke="#d0d0d0" stroke-width="0.8" fill="none"/><path d="M113.3 24.8l1.5 1.275l1.5 -1.275" stroke="#d0d0d0" stroke-width="0.8" fill="none"/><path d="M144.8 22.6l1.5 1.275l1.5 -1.275" stroke="#d0d0d0" stroke-width="0.8" fill="none"/><path d="M205 21.6l1.53 1.8l-1.53 1.8" stroke="#d0d0d0" stroke-width="0.8" fill="none"/><rect x="253" y="18.8" width="8.2" height="8.2" fill="url(#gl)" stroke="#c4c4c4" stroke-width=".6"/><rect x="264.5" y="18.8" width="8.2" height="8.2" fill="#6a6a6a" stroke="#b8b8b8" stroke-width=".6"/><circle cx="268.6" cy="22.9" r="3.5" fill="url(#gr)"/><rect x="274.4" y="17.9" width="10.2" height="10" fill="#2e2e2e" stroke="#222" stroke-width=".6" rx=".8"/><rect x="275.8" y="19.2" width="7.4" height="7.4" fill="url(#gf)" stroke="#cfcfcf" stroke-width=".6"/><path d="M276.4 23.72q1.64 -2.05 3.28 -0.41t3.116 -1.23" stroke="#fff" stroke-width=".7" fill="none" opacity=".8"/><circle cx="306" cy="23.5" r="2.8" fill="#f2f2f2"/><circle cx="306" cy="23.5" r="1.05" fill="#3a3a3a"/><circle cx="332.6" cy="23.5" r="2.5" fill="none" stroke="#c8c8c8" stroke-width=".7"/><path d="M360.4 20.4h4.4v5h-4.4zM361.4 22h2.4M361.4 23.6h1.6" stroke="#cfcfcf" stroke-width=".6"/><path d="M367.6 19.6L364 24.4L363.6 26L365.2 25.4L368.6 20.6Z" fill="#d8d8d8"/><path d="M372.8 22.4l1.6 1.36l1.6 -1.36" stroke="#d0d0d0" stroke-width="0.8" fill="none"/><path d="M721 20.6h1.6v1.6H721zM724.2 20.6h1.6v1.6h-1.6zM721 24h1.6v1.6H721zM724.2 24h1.6v1.6h-1.6z" fill="#6e6e6e"/><rect x="731.8" y="19.6" width="1.6" height="7" fill="#ececec"/><path d="M735 21h1.6a2 2 0 0 1 0 4.2H735z" stroke="#dcdcdc" stroke-width=".8"/><path d="M742 22.6l1.2 1.02l1.2 -1.02" stroke="#6a6a6a" stroke-width="0.6" fill="none"/><rect x="754" y="21" width="2.2" height="1.2" fill="#cfcfcf"/><rect x="757" y="21" width="2.2" height="1.2" fill="#cfcfcf"/><rect x="754" y="23" width="2.2" height="1.2" fill="#cfcfcf"/><rect x="757" y="23" width="2.2" height="1.2" fill="#cfcfcf"/><rect x="754" y="25" width="2.2" height="1.2" fill="#cfcfcf"/><rect x="757" y="25" width="2.2" height="1.2" fill="#cfcfcf"/><path d="M37.8 36l2.8 2.8M40.6 36l-2.8 2.8" stroke="#e0e0e0" stroke-width=".8"/><path d="M3.4 32.6l1 1l-1 1M5.2 32.6l1 1l-1 1" stroke="#c8c8c8" stroke-width=".5"/><path d="M646 32.6l1 1l-1 1M647.8 32.6l1 1l-1 1" stroke="#c8c8c8" stroke-width=".5"/><path d="M760.4 32.8l1 1l-1 1M762.2 32.8l1 1l-1 1" stroke="#c8c8c8" stroke-width=".5"/><path d="M11 39.8h9.5" stroke="#3e3e3e" stroke-width=".9"/><path d="M629 48h2.6" stroke="#8a8a8a" stroke-width=".7"/><path d="M628.6 455.6l1.3 1.105l1.3 -1.105" stroke="#b0b0b0" stroke-width="0.6" fill="none"/><path d="M622.6 462.6l1.2 1.2l-1.2 1.2" stroke="#b0b0b0" stroke-width=".6"/><g transform="translate(9.4 51.3)"><path d="M-2.6 -3.8L2.8 1.2L0.2 1.4L-1 3.8Z" stroke="#d6d6d6" fill="none" stroke-width=".8" stroke-linejoin="round" stroke-linecap="round"/></g><g transform="translate(23.6 51.3)"><path d="M-2.6 -3.8L2.8 1.2L0.2 1.4L-1 3.8Z" fill="#d6d6d6"/></g><g transform="translate(9.4 62.3)"><path d="M-3.4 3.4L1 -1" stroke="#d6d6d6" stroke-width="1.3"/><path d="M2.6 -3.6v1.6M1.8 -2.8h1.6M3.4 -.6v1M.2 -3.4l.6 .6" stroke="#d6d6d6" stroke-width=".6"/></g><g transform="translate(23.6 62.3)"><ellipse cx="-.4" cy="-1.2" rx="3.2" ry="2.3" stroke="#d6d6d6" fill="none" stroke-width=".8" stroke-linejoin="round" stroke-linecap="round"/><path d="M-2.4 .8q-.8 1.6 .6 2.6" stroke="#d6d6d6" fill="none" stroke-width=".8" stroke-linejoin="round" stroke-linecap="round"/><path d="M.2 -.8L3.6 2.4L1.8 2.4L1 4Z" fill="#d6d6d6"/></g><g transform="translate(9.4 73)"><path d="M-3.4 3.4L-2.6 -.2L.8 -3L3 -.8L.2 2.6Z" fill="#d6d6d6"/><path d="M1.6 -3.8L3.8 -1.6" stroke="#d6d6d6" stroke-width="1.3"/><circle cx="-.6" cy=".6" r=".7" fill="#525252"/></g><g transform="translate(24.4 73)"><path d="M-3.4 3.4L-2.6 -.2L.8 -3L3 -.8L.2 2.6Z" fill="#d6d6d6"/><path d="M1.6 -3.8L3.8 -1.6" stroke="#d6d6d6" stroke-width="1.3"/><circle cx="-.6" cy=".6" r=".7" fill="#525252"/><path d="M-4.6 -2.6q-1.4 3 .6 5.4" stroke="#d6d6d6" fill="none" stroke-width=".8" stroke-linejoin="round" stroke-linecap="round"/></g><g transform="translate(9.4 83.9)"><path d="M-3.2 -3.6H3.2V-1.9H2.5L2.3 -2.6H.8V2.6L1.7 2.9V3.6H-1.7V2.9L-.8 2.6V-2.6H-2.3L-2.5 -1.9H-3.2Z" fill="#d6d6d6"/></g><g transform="translate(23.6 83.9)"><path d="M-3.2 3.2L3.2 -3.2" stroke="#d6d6d6" stroke-width=".9"/></g><g transform="translate(9.4 94.9)"><rect x="-3.4" y="-3" width="6.8" height="6" stroke="#d6d6d6" fill="none" stroke-width=".8" stroke-linejoin="round" stroke-linecap="round"/></g><g transform="translate(23.6 94.9)"><path d="M3.6 -3.8L-.6 .2L.6 1.4Z" fill="#d6d6d6"/><path d="M-1.2 .8Q-3 .8 -3.8 3.8Q-1 3.6 -.2 1.8Z" fill="#d6d6d6"/></g><g transform="translate(9.4 106.1)"><circle cx="-1" cy="-.8" r="2.6" stroke="#d6d6d6" fill="none" stroke-width=".8" stroke-linejoin="round" stroke-linecap="round"/><path d="M-.6 2.8L3.4 -1.6" stroke="#d6d6d6" stroke-width="1.3"/></g><g transform="translate(23.6 106.1)"><path d="M-3.6 .6L.6 -3.6L3.8 -.4L-.4 3.8Z" fill="#d6d6d6"/><path d="M-3.6 .6L-1.6 -1.4L1.6 1.8L-.4 3.8Z" fill="#525252" stroke="#d6d6d6" stroke-width=".6"/></g><g transform="translate(9.4 116.8)"><path d="M-2.4 -2.2A3.2 3.2 0 1 0 .4 -3.2" stroke="#d6d6d6" fill="none" stroke-width=".8" stroke-linejoin="round" stroke-linecap="round"/><path d="M-3.8 -3.4L-.9 -3L-2.6 -.6Z" fill="#d6d6d6"/></g><g transform="translate(23.6 116.8)"><rect x="-3.8" y="-.6" width="4.6" height="4.2" stroke="#d6d6d6" fill="none" stroke-width=".8" stroke-linejoin="round" stroke-linecap="round"/><rect x="-1.4" y="-3.6" width="5.2" height="4.8" stroke="#d6d6d6" fill="none" stroke-width=".8" stroke-linejoin="round" stroke-linecap="round"/></g><g transform="translate(9.4 127.5)"><path d="M-3.6 3.2Q-1.8 -1.5 0 0T3.6 -3" stroke="#d6d6d6" fill="none" stroke-width=".8" stroke-linejoin="round" stroke-linecap="round"/><path d="M-2.4 -2.6l1.4 1.6M1 1.6l1.4 1.4" stroke="#d6d6d6" fill="none" stroke-width=".8" stroke-linejoin="round" stroke-linecap="round"/></g><g transform="translate(23.6 127.5)"><path d="M.2 -3.8L3.8 -.2L2.6 .2L1.2 -.2L-.4 1.4L-.4 2.8L-2.8 .4L-1.4 .4L.2 -1.2L-.2 -2.6Z" fill="#d6d6d6"/><path d="M-1.6 1.6L-3.8 3.8" stroke="#d6d6d6" stroke-width=".8"/></g><g transform="translate(9.4 138.5)"><circle cx="-1.4" cy="-.8" r="2.3" stroke="#d6d6d6" fill="none" stroke-width=".8" stroke-linejoin="round" stroke-linecap="round"/><circle cx="1" cy="-1.4" r="2.1" stroke="#d6d6d6" fill="none" stroke-width=".8" stroke-linejoin="round" stroke-linecap="round"/><path d="M.4 .2L3.8 3L2 3.1L1.4 4.4Z" fill="#d6d6d6"/></g><g transform="translate(23.6 138.5)"><path d="M-2.8 -3.8V3.6H3.8M-2.8 -2.2L2.8 1.6V3.6M-2.8 .6L.6 2V3.6M-.4 -.6V3.6" stroke="#d6d6d6" fill="none" stroke-width=".8" stroke-linejoin="round" stroke-linecap="round" stroke-width=".6"/></g><g transform="translate(9.4 149.5)"><rect x="-3.4" y="-3.2" width="6.8" height="6.4" stroke="#d6d6d6" fill="none" stroke-width=".8" stroke-linejoin="round" stroke-linecap="round"/><path d="M-3.4 0Q0 -1.4 3.4 0M0 -3.2Q1.2 0 0 3.2" stroke="#d6d6d6" fill="none" stroke-width=".8" stroke-linejoin="round" stroke-linecap="round" stroke-width=".6"/><rect x="-1" y="-1.4" width="1.8" height="1.8" fill="#d6d6d6"/></g><rect x="17" y="145" width="12.2" height="9.2" fill="#2b2b2b" stroke="#1f1f1f" stroke-width=".5" rx=".6"/><rect x="19.3" y="146.6" width="7.6" height="6" fill="url(#gl2)" stroke="#d8d8d8" stroke-width=".6"/><g transform="translate(9.4 160.6)"><path d="M-3.8 3.8L-3.2 1.6L.6 -2.2L2.2 -.6L-1.6 3.2Z" stroke="#d6d6d6" fill="none" stroke-width=".8" stroke-linejoin="round" stroke-linecap="round"/><path d="M.2 -2.8L2.8 -.2M1.4 -1.6L3 -3.2" stroke="#d6d6d6" stroke-width="1.5" stroke-linecap="round"/></g><g transform="translate(23.6 160.6)"><rect x="-3.8" y="-3.4" width="3.6" height="3.2" fill="#d6d6d6"/><rect x="-1.8" y="-1.6" width="3.8" height="3.2" fill="#9a9a9a"/><rect x=".4" y=".4" width="3.6" height="3.2" stroke="#d6d6d6" fill="none" stroke-width=".8" stroke-linejoin="round" stroke-linecap="round"/></g><g transform="translate(9.4 171.8)"><rect x="-1.2" y="-1" width="3.6" height="4.6" rx=".6" stroke="#d6d6d6" fill="none" stroke-width=".8" stroke-linejoin="round" stroke-linecap="round"/><path d="M-.4 -1V-2.6H1.6V-1" stroke="#d6d6d6" fill="none" stroke-width=".8" stroke-linejoin="round" stroke-linecap="round"/><path d="M-3.6 -3.6l1 .6M-3.8 -1.8h1M-3.4 .2l1 -.5" stroke="#d6d6d6" stroke-width=".6"/></g><g transform="translate(23.6 171.8)"><path d="M-3.6 -3.8V3.6H3.8" stroke="#d6d6d6" fill="none" stroke-width=".8" stroke-linejoin="round" stroke-linecap="round"/><rect x="-2.4" y="-.4" width="1.4" height="3.4" fill="#d6d6d6"/><rect x="-.2" y="-3" width="1.4" height="6" fill="#d6d6d6"/><rect x="2" y="-1.6" width="1.4" height="4.6" fill="#d6d6d6"/></g><g transform="translate(9.4 182.8)"><path d="M-1.8 -3.8V3.8M-3.8 -1.8H3.8M-1.8 2H3.4V-1.8" stroke="#d6d6d6" fill="none" stroke-width=".8" stroke-linejoin="round" stroke-linecap="round" stroke-width=".7"/></g><g transform="translate(23.6 182.8)"><path d="M3.6 -3.8L-1.2 1L-.2 2.2Z" fill="#d6d6d6"/><path d="M-1.6 1.4L-3.6 3.8L-.8 2.6Z" fill="#d6d6d6"/></g><g transform="translate(9.4 193.9)"><path d="M-2.2 3.6Q-3.4 1.4 -3.8 -.2Q-3 -.8 -2 .6V-2.6Q-1.4 -3.2 -1 -2.6V-3.4Q-.2 -4 .2 -3.4V-3Q1 -3.6 1.4 -2.8V-2.2Q2.2 -2.6 2.6 -2V1.2Q2.6 2.6 1.8 3.6Z" fill="#d6d6d6"/></g><g transform="translate(23.6 193.9)"><circle cx="-.8" cy="-.8" r="2.7" stroke="#d6d6d6" fill="none" stroke-width=".8" stroke-linejoin="round" stroke-linecap="round"/><path d="M1.2 1.2L3.8 3.8" stroke="#d6d6d6" stroke-width="1.1"/></g><path d="M29.8 56.3v-1.6l-1.6 1.6z" fill="#c8c8c8"/><path d="M15.6 67.3v-1.6l-1.6 1.6z" fill="#c8c8c8"/><path d="M29.8 67.3v-1.6l-1.6 1.6z" fill="#c8c8c8"/><path d="M15.6 78v-1.6l-1.6 1.6z" fill="#c8c8c8"/><path d="M29.8 78v-1.6l-1.6 1.6z" fill="#c8c8c8"/><path d="M15.6 88.9v-1.6l-1.6 1.6z" fill="#c8c8c8"/><path d="M15.6 99.9v-1.6l-1.6 1.6z" fill="#c8c8c8"/><path d="M29.8 99.9v-1.6l-1.6 1.6z" fill="#c8c8c8"/><path d="M15.6 111.1v-1.6l-1.6 1.6z" fill="#c8c8c8"/><path d="M29.8 111.1v-1.6l-1.6 1.6z" fill="#c8c8c8"/><path d="M15.6 121.8v-1.6l-1.6 1.6z" fill="#c8c8c8"/><path d="M29.8 121.8v-1.6l-1.6 1.6z" fill="#c8c8c8"/><path d="M15.6 132.5v-1.6l-1.6 1.6z" fill="#c8c8c8"/><path d="M29.8 132.5v-1.6l-1.6 1.6z" fill="#c8c8c8"/><path d="M15.6 143.5v-1.6l-1.6 1.6z" fill="#c8c8c8"/><path d="M29.8 143.5v-1.6l-1.6 1.6z" fill="#c8c8c8"/><path d="M15.6 154.5v-1.6l-1.6 1.6z" fill="#c8c8c8"/><path d="M15.6 165.6v-1.6l-1.6 1.6z" fill="#c8c8c8"/><path d="M29.8 165.6v-1.6l-1.6 1.6z" fill="#c8c8c8"/><path d="M15.6 176.8v-1.6l-1.6 1.6z" fill="#c8c8c8"/><path d="M29.8 176.8v-1.6l-1.6 1.6z" fill="#c8c8c8"/><path d="M15.6 187.8v-1.6l-1.6 1.6z" fill="#c8c8c8"/><path d="M29.8 187.8v-1.6l-1.6 1.6z" fill="#c8c8c8"/><rect x="11" y="211" width="16.2" height="16.2" fill="#fafafa"/><path d="M11.3 226.9L26.9 211.3" stroke="#c8302c" stroke-width=".85"/><rect x="16.3" y="216.3" width="5.6" height="5.6" fill="#4a4440"/><path d="M16.3 221.9L21.9 216.3" stroke="#b8403a" stroke-width=".7"/><rect x="2.4" y="202.2" width="16.6" height="16.2" fill="url(#swg)"/><rect x="2.4" y="202.2" width="16.6" height="16.2" fill="url(#swg2)"/><rect x="2.4" y="202.2" width="16.6" height="16.2" fill="url(#swg3)"/><rect x="2.85" y="202.65" width="15.7" height="15.3" fill="none" stroke="#f0b4d2" stroke-width=".9"/><path d="M24 205.6q3 -.4 3.2 2.6" stroke="#d0d0d0" stroke-width=".7"/><path d="M23 205.6l1.8 -1.2v2.4zM27.2 209l-1.2 -1.6h2.4z" fill="#d0d0d0"/><rect x="4.4" y="223.6" width="3.8" height="3.6" fill="#525252" stroke="#d8d8d8" stroke-width=".6"/><rect x="3" y="222.2" width="3.8" height="3.6" fill="#e8e8e8"/><rect x="4.3" y="231.8" width="5.8" height="6" fill="#fbfbfb"/><rect x="13.4" y="231.8" width="5.8" height="6" fill="url(#gwb)"/><rect x="21.6" y="231.2" width="6.8" height="7.2" fill="#2c2c2c"/><rect x="22.3" y="231.9" width="5.4" height="5.8" fill="#fbfbfb"/><path d="M22.5 237.5L27.5 232.1" stroke="#e0322d" stroke-width=".9"/><rect x="3.2" y="241.6" width="7.8" height="8" fill="#2e2e2e" rx=".6"/><circle cx="6.4" cy="245" r="2" fill="#cfcfcf"/><rect x="6.2" y="245" width="3.6" height="3.4" fill="#8e8e8e" stroke="#e0e0e0" stroke-width=".5"/><circle cx="15.4" cy="245" r="2" fill="none" stroke="#a8a8a8" stroke-width=".6"/><circle cx="17" cy="246.4" r="1.9" fill="#8a8a8a" stroke="#b8b8b8" stroke-width=".5"/><circle cx="25" cy="245.4" r="2.3" fill="none" stroke="#9a9a9a" stroke-width=".6"/><circle cx="25" cy="245.4" r=".9" fill="#a8a8a8"/><rect x="14.6" y="254.4" width="7" height="5" stroke="#d4d4d4" stroke-width=".7"/><rect x="11.6" y="256.4" width="7" height="5" fill="#525252" stroke="#d4d4d4" stroke-width=".7"/><circle cx="14.1" cy="272" r=".75" fill="#cfcfcf"/><circle cx="16.5" cy="272" r=".75" fill="#cfcfcf"/><circle cx="18.9" cy="272" r=".75" fill="#cfcfcf"/><path d="M640 39.2h8" stroke="#424242" stroke-width=".7" stroke-dasharray=".7 .5"/><path d="M640 57.6h8" stroke="#424242" stroke-width=".7" stroke-dasharray=".7 .5"/><path d="M640 76.5h8" stroke="#424242" stroke-width=".7" stroke-dasharray=".7 .5"/><path d="M640 96.8h8" stroke="#424242" stroke-width=".7" stroke-dasharray=".7 .5"/><path d="M640 115.4h8" stroke="#424242" stroke-width=".7" stroke-dasharray=".7 .5"/><path d="M640 145h8" stroke="#424242" stroke-width=".7" stroke-dasharray=".7 .5"/><path d="M640 163h8" stroke="#424242" stroke-width=".7" stroke-dasharray=".7 .5"/><path d="M636 55.6h16.5" stroke="#404040" stroke-width=".7"/><path d="M636 74h16.5" stroke="#404040" stroke-width=".7"/><path d="M636 95h16.5" stroke="#404040" stroke-width=".7"/><path d="M636 113.7h16.5" stroke="#404040" stroke-width=".7"/><path d="M636 143h16.5" stroke="#404040" stroke-width=".7"/><path d="M636 161.3h16.5" stroke="#404040" stroke-width=".7"/><circle cx="643.9" cy="47.6" r="2.6" fill="#dadada"/><circle cx="643.9" cy="47.6" r="3.4" stroke="#cfcfcf" stroke-width="1" stroke-dasharray=".9 .7"/><path d="M641.8 66.4h3.6l.5 3.6h-4.6z" fill="#dedede"/><path d="M643.6 62.4v4M641.4 64.6l1.4 1.6M646 64.6l-1.4 1.6" stroke="#dedede" stroke-width="1"/><rect x="639.6" y="81.6" width="8" height="6.2" fill="url(#gl2)" stroke="#dcdcdc" stroke-width=".7"/><rect x="639.6" y="99" width="5.6" height="5.6" stroke="#d6d6d6" stroke-width=".8" rx=".6"/><rect x="642.2" y="102.2" width="5.8" height="5.4" fill="#535353" stroke="#d6d6d6" stroke-width=".8" rx=".6"/><ellipse cx="641.8" cy="122.6" rx="2.2" ry="1.7" stroke="#dedede" stroke-width=".9"/><ellipse cx="646" cy="122.6" rx="2.2" ry="1.7" stroke="#dedede" stroke-width=".9"/><path d="M640.4 131.6v8" stroke="#dedede" stroke-width=".9"/><rect x="641.4" y="132.6" width="3.2" height="2" fill="#dedede"/><rect x="641.4" y="136.2" width="6" height="2.2" fill="#dedede"/><rect x="641" y="151" width="5.6" height="5.8" stroke="#dedede" stroke-width=".8" stroke-dasharray="1.2 .8"/><path d="M640 150h1.6v1.6H640zM646 150h1.6v1.6H646zM640 156.2h1.6v1.6H640zM646 156.2h1.6v1.6H646z" fill="#dedede"/><path d="M658.4 89.6h8" stroke="#a0a0a0" stroke-width=".6"/><rect x="661.6" y="88.8" width="1.7" height="1.7" fill="#f0f0f0"/><path d="M675.6 104.2L671.4 107.6H676.4" stroke="#cfcfcf" stroke-width=".7"/><path d="M674 107.4a2 2 0 0 0 -.8 -1.6" stroke="#cfcfcf" stroke-width=".5"/><path d="M677.4 106.6h.1" stroke="#bbb" stroke-width=".6"/><circle cx="753" cy="87.4" r="1.5" stroke="#d4d4d4" stroke-width=".7"/><circle cx="754.6" cy="91.2" r="1.5" stroke="#d4d4d4" stroke-width=".7"/><path d="M751.4 85.8l5.4 6.6" stroke="#d4d4d4" stroke-width=".7"/><path d="M721.2 105.8v4.4l2.2 -2.2zM727.4 105.8v4.4l-2.2 -2.2z" stroke="#d4d4d4" stroke-width=".6"/><path d="M724.3 105v6" stroke="#d4d4d4" stroke-width=".5"/><path d="M736 104.2h4.6l-2.3 2.4zM736 111h4.6l-2.3 -2.4z" fill="#d8d8d8"/><path d="M735.2 107.6h6.2" stroke="#d4d4d4" stroke-width=".5"/><path d="M657 121.5h104" stroke="#4d4d4d" stroke-width=".5"/><path d="M657 198.7h104" stroke="#4d4d4d" stroke-width=".5"/><path d="M657 248h104" stroke="#4d4d4d" stroke-width=".5"/><path d="M657 287h104" stroke="#4d4d4d" stroke-width=".5"/><circle cx="755.4" cy="117" r=".75" fill="#cfcfcf"/><circle cx="757.8" cy="117" r=".75" fill="#cfcfcf"/><circle cx="760.2" cy="117" r=".75" fill="#cfcfcf"/><circle cx="755.4" cy="194" r=".75" fill="#cfcfcf"/><circle cx="757.8" cy="194" r=".75" fill="#cfcfcf"/><circle cx="760.2" cy="194" r=".75" fill="#cfcfcf"/><circle cx="755.4" cy="242.8" r=".75" fill="#cfcfcf"/><circle cx="757.8" cy="242.8" r=".75" fill="#cfcfcf"/><circle cx="760.2" cy="242.8" r=".75" fill="#cfcfcf"/><g transform="translate(656 138.6)"><rect width="10" height="9.6" fill="#8a3aa8"/><path d="M0 0H7L5 5L0 6Z" fill="#22a79c"/><path d="M10 2.4V9.6H5L4.4 5Z" fill="#f0803a"/><path d="M2 3.4L8 3L7 8L2.6 7.4Z" fill="#e03a8c"/><path d="M0 6L3 5.6L4.4 9.6H0Z" fill="#6a3ab0"/></g><rect x="658" y="153" width="7.2" height="7.2" fill="#fafafa"/><path d="M658.3 159.9L664.9 153.3" stroke="#c8302c" stroke-width=".85"/><rect x="660" y="155" width="3.2" height="3.2" fill="#4a4440"/><path d="M660 158.2L663.2 155" stroke="#b8403a" stroke-width=".7"/><rect x="658.3" y="166.3" width="7" height="7.2" stroke="#bdbdbd" stroke-width=".6"/><path d="M659.6 167.6h1.4v1.4h-1.4zM662.6 167.6h1.4v1.4h-1.4zM661.1 169.1h1.4v1.4h-1.4zM659.6 170.6h1.4v1.4h-1.4zM662.6 170.6h1.4v1.4h-1.4z" fill="#686868"/><path d="M694.6 156.2l1.5 -1.275l1.5 1.275" stroke="#d0d0d0" stroke-width="0.8" fill="none"/><path d="M694.6 158.4l1.5 1.275l1.5 -1.275" stroke="#d0d0d0" stroke-width="0.8" fill="none"/><path d="M716.4 156.4l1.5 1.275l1.5 -1.275" stroke="#d0d0d0" stroke-width="0.8" fill="none"/><path d="M717.2 167.8l1.53 1.8l-1.53 1.8" stroke="#d0d0d0" stroke-width="0.8" fill="none"/><rect x="681" y="217.2" width="7.4" height="7.4" fill="url(#gl)" stroke="#c4c4c4" stroke-width=".6"/><rect x="691.8" y="217.2" width="7.4" height="7.4" fill="#6a6a6a" stroke="#b8b8b8" stroke-width=".6"/><circle cx="695.5" cy="220.9" r="3.1" fill="url(#gr)"/><rect x="701.6" y="216.3" width="9.4" height="9.2" fill="#2e2e2e" stroke="#222" stroke-width=".6" rx=".8"/><rect x="703" y="217.6" width="6.6" height="6.6" fill="url(#gf)" stroke="#cfcfcf" stroke-width=".6"/><path d="M703.6 221.64q1.48 -1.85 2.96 -0.37t2.812 -1.11" stroke="#fff" stroke-width=".7" fill="none" opacity=".8"/><circle cx="682.3" cy="233" r="2.8" fill="#f2f2f2"/><circle cx="682.3" cy="233" r="1.05" fill="#3a3a3a"/><circle cx="706" cy="233" r="2.5" fill="none" stroke="#c8c8c8" stroke-width=".7"/><path d="M686.6 256.4v6.4" stroke="#d8d8d8" stroke-width=".7"/><circle cx="686.6" cy="257.4" r="1.2" fill="#d8d8d8"/><path d="M686.6 258.6l3.2 3.4" stroke="#d8d8d8" stroke-width=".7"/><path d="M697 263q.4 -5 5.6 -6" stroke="#d8d8d8" stroke-width=".8"/><rect x="699.6" y="256.6" width="2" height="2" fill="#d8d8d8"/><path d="M696.4 262.4h1.6" stroke="#d8d8d8" stroke-width=".7"/><g transform="translate(687.6 276.8)"><path d="M-3.2 3.4L-2.4 -.2L.8 -2.8L2.8 -.8L.2 2.6Z" fill="#dcdcdc"/><path d="M1.4 -3.6L3.6 -1.4" stroke="#dcdcdc" stroke-width="1.2"/><path d="M-3.6 -2.4h2M-2.6 -3.4v2" stroke="#dcdcdc" stroke-width=".6"/></g><path d="M698 280v-4.4q0 -2 3.2 -2.4" stroke="#6e6e6e" stroke-width=".8" stroke-dasharray="1.2 .8"/><rect x="701" y="272.4" width="1.6" height="1.6" fill="#6e6e6e"/><path d="M710.6 279.8q.4 -5.4 5.4 -6.4" stroke="#dcdcdc" stroke-width=".8" stroke-dasharray="1.4 .8"/><rect x="709.8" y="278.6" width="1.8" height="1.8" fill="#dcdcdc"/><rect x="714.8" y="272.6" width="1.8" height="1.8" fill="#dcdcdc"/><path d="M713.6 277l3.2 2.4" stroke="#dcdcdc" stroke-width=".8"/><path d="M747 305.6l1.5 1.275l1.5 -1.275" stroke="#c8c8c8" stroke-width="0.7" fill="none"/><path d="M60.4 462.6l1.5 1.275l1.5 -1.275" stroke="#c4c4c4" stroke-width="0.7" fill="none"/><path d="M106.4 462.6l1.5 1.275l1.5 -1.275" stroke="#c4c4c4" stroke-width="0.7" fill="none"/><path d="M70.4 461.8v3.6" stroke="#c4c4c4" stroke-width=".7"/><path d="M73.6 461.8v3.6l-2.4 -1.8z" fill="#c4c4c4"/><path d="M81.4 461.8v3.6l-2.4 -1.8z" fill="#c4c4c4"/><path d="M117 461.8v3.6l2.4 -1.8z" fill="#c4c4c4"/><path d="M123.2 461.8v3.6l2.4 -1.8z" fill="#c4c4c4"/><path d="M126.4 461.8v3.6" stroke="#c4c4c4" stroke-width=".7"/><path d="M226.4 461.6v4l2.6 -2z" fill="#d0d0d0"/><path d="M235.2 462.2v3" stroke="#7a7a7a" stroke-width=".6"/><rect x="257" y="467.8" width="30" height="2.2" fill="#363636"/><rect x="150" y="468" width="15" height="2" fill="#5c5c5a"/><rect x="391" y="468" width="23" height="2" fill="#484848"/><rect x="528" y="468" width="8" height="2" fill="#585856"/></svg><div class="a" style="left:709px;top:231.8px;width:50px;height:7.6px;background:#e9e9e9;border:.4px solid #bdbdbd"></div><span class="t " id="t0" style="left:307px;top:5.2px;transform:scaleX(0.944);font-size:6.4px;color:#dcdcdc">Adobe Illustrator CC 2019</span><span class="t b" id="t1" style="left:633.5px;top:5.4px;transform:scaleX(0.882);font-size:6.4px;color:#eee">Essentials</span><span class="t " id="t2" style="left:691.7px;top:5.1px;transform:scaleX(0.852);color:#8e8e8e">Search Adobe Stock</span><span class="t " id="t3" style="left:7px;top:20px;transform:scaleX(0.707);">Path</span><span class="t u" id="t4" style="left:93.5px;top:20px;transform:scaleX(0.775);">Stroke:</span><span class="t u" id="t5" style="left:154.5px;top:20px;transform:scaleX(0.771);">Opacity:</span><span class="t " id="t6" style="left:177.5px;top:20px;transform:scaleX(0.727);">100%</span><span class="t " id="t7" style="left:216px;top:20px;transform:scaleX(0.809);">Gradient Type:</span><span class="t " id="t8" style="left:288px;top:20px;transform:scaleX(0.742);">Draw:</span><span class="t b" id="t9" style="left:310.8px;top:20px;transform:scaleX(0.727);">Points</span><span class="t " id="t10" style="left:338px;top:20px;transform:scaleX(0.743);">Lines</span><span class="t b" id="t11" style="left:44.8px;top:34.8px;transform:scaleX(0.751);color:#efefef;font-size:6.4px">Colibri.ai @ 100% (RGB/GPU Preview)</span><span class="t b" id="t12" style="left:657px;top:39.6px;transform:scaleX(0.784);color:#f4f4f4">Properties</span><span class="t b" id="t13" style="left:689px;top:39.6px;transform:scaleX(0.752);color:#c6c6c6">Layers</span><span class="t b" id="t14" style="left:712.6px;top:39.6px;transform:scaleX(0.803);color:#c6c6c6">Libraries</span><span class="t " id="t15" style="left:658px;top:53.6px;transform:scaleX(0.707);">Path</span><span class="t " id="t16" style="left:658px;top:68.6px;transform:scaleX(0.804);">Transform</span><span class="t " id="t17" style="left:673px;top:79.8px;transform:scaleX(0.768);">X:</span><span class="t b" id="t18" style="left:681.3px;top:79.8px;transform:scaleX(0.794);">460.2 pt</span><span class="t " id="t19" style="left:673px;top:92.2px;transform:scaleX(0.816);">Y:</span><span class="t b" id="t20" style="left:681.3px;top:92.2px;transform:scaleX(0.800);">243.89 pt</span><span class="t " id="t21" style="left:711.4px;top:79.8px;transform:scaleX(0.738);">W:</span><span class="t " id="t22" style="left:712px;top:92.2px;transform:scaleX(0.743);">H:</span><span class="t " id="t23" style="left:657.6px;top:127.6px;transform:scaleX(0.776);">Appearance</span><span class="t " id="t24" style="left:671px;top:140px;transform:scaleX(0.885);">Fill</span><span class="t u" id="t25" style="left:671px;top:153.6px;transform:scaleX(0.810);">Stroke</span><span class="t u" id="t26" style="left:671px;top:166.2px;transform:scaleX(0.810);">Opacity</span><span class="t " id="t27" style="left:695px;top:166.2px;transform:scaleX(0.695);">100%</span><span class="t " id="t28" style="left:661px;top:180px;transform:scaleX(0.889);font-style:italic;font-size:6.4px">fx.</span><span class="t " id="t29" style="left:657.8px;top:204.6px;transform:scaleX(0.796);">Gradient</span><span class="t " id="t30" style="left:665.6px;top:217.6px;transform:scaleX(0.753);">Type:</span><span class="t " id="t31" style="left:665px;top:229.6px;transform:scaleX(0.779);">Draw:</span><span class="t b" id="t32" style="left:687.4px;top:229.6px;transform:scaleX(0.692);">Points</span><span class="t " id="t33" style="left:712.5px;top:232.2px;transform:scaleX(0.880);color:#5c5c5c;-webkit-text-stroke:0">Freeform Gradient</span><span class="t " id="t34" style="left:657.8px;top:256.2px;transform:scaleX(0.791);">Convert:</span><span class="t " id="t35" style="left:657.8px;top:273.1px;transform:scaleX(0.786);">Anchors:</span><span class="t " id="t36" style="left:657.8px;top:291.2px;transform:scaleX(0.798);">Quick Actions</span><span class="t b" id="t37" style="left:682.6px;top:303.1px;transform:scaleX(0.730);">Start Global Edit</span><span class="t " id="t38" style="left:37px;top:460.5px;transform:scaleX(0.885);font-size:5.3px;color:#d8d8d8">100%</span><span class="t " id="t39" style="left:87.5px;top:460.5px;transform:scaleX(0.813);font-size:5.3px;color:#d8d8d8">2</span><span class="t " id="t40" style="left:167.5px;top:460.5px;transform:scaleX(0.959);font-size:5.3px;color:#d8d8d8">Gradient</span></body></html>
